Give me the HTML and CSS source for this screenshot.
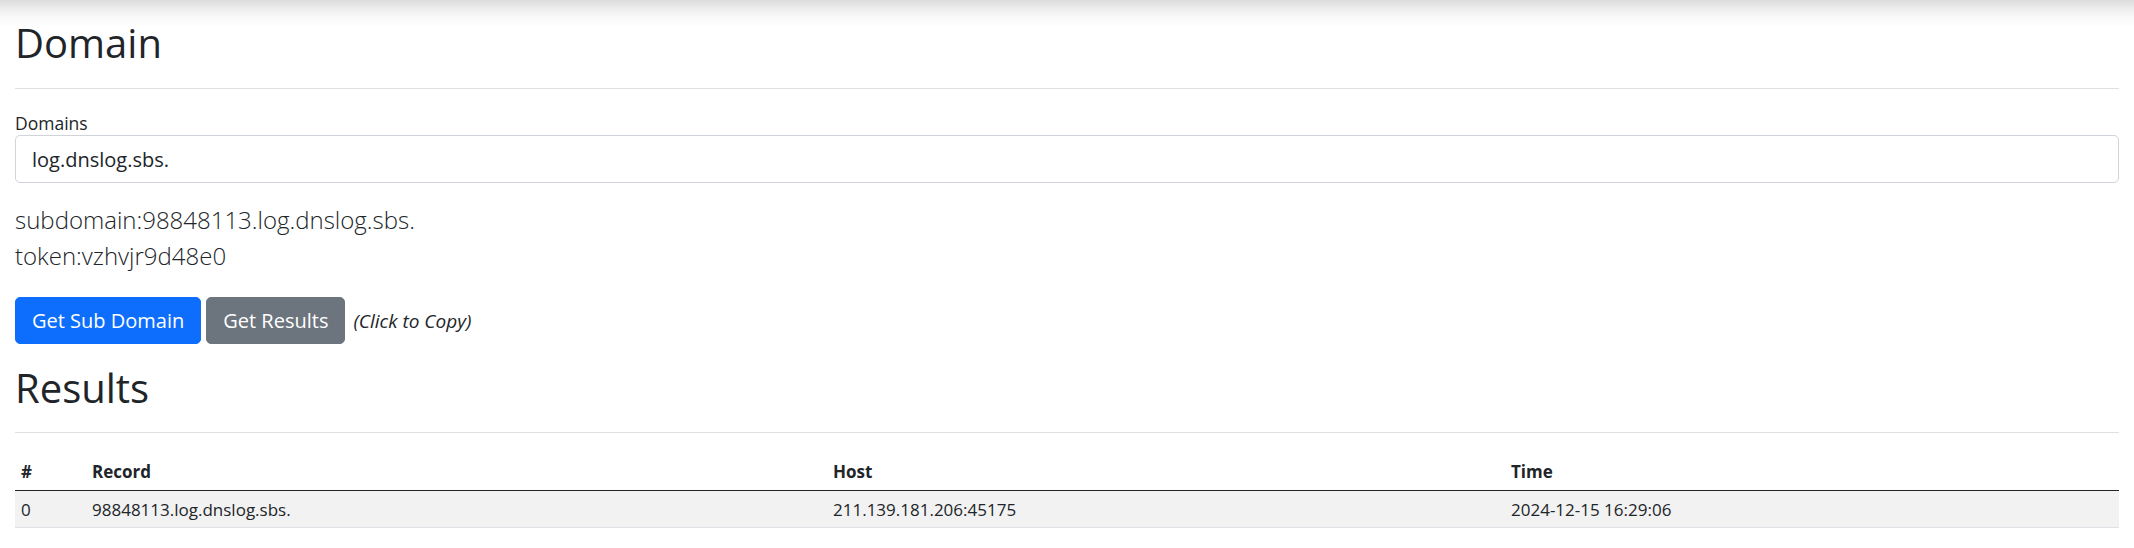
FILE: index.html
```html
<!DOCTYPE html>
<html lang="en">
<head>
<meta charset="utf-8">
<title>DNSLog</title>
<link rel="stylesheet" href="styles.css">
</head>
<body>
<main class="page">
  <section class="panel">
    <h1 class="title">Domain</h1>
    <hr class="rule">
    <label class="field-label" for="domains">Domains</label>
    <input class="field-input" id="domains" type="text" value="log.dnslog.sbs.">
    <div class="lead">
      <div class="lead-line">subdomain:98848113.log.dnslog.sbs.</div>
      <div class="lead-line">token:vzhvjr9d48e0</div>
    </div>
    <div class="actions">
      <button class="btn btn-primary" type="button">Get Sub Domain</button>
      <button class="btn btn-secondary" type="button">Get Results</button>
      <em class="hint">(Click to Copy)</em>
    </div>
  </section>
  <section class="panel">
    <h1 class="title title-results">Results</h1>
    <hr class="rule rule-results">
    <table class="results">
      <thead>
        <tr>
          <th class="col-idx">#</th>
          <th class="col-record">Record</th>
          <th class="col-host">Host</th>
          <th class="col-time">Time</th>
        </tr>
      </thead>
      <tbody>
        <tr>
          <td>0</td>
          <td>98848113.log.dnslog.sbs.</td>
          <td>211.139.181.206:45175</td>
          <td>2024-12-15 16:29:06</td>
        </tr>
      </tbody>
    </table>
  </section>
</main>
</body>
</html>
```

FILE: styles.css
```css
html, body {
  margin: 0;
  padding: 0;
}

body {
  font-family: "Open Sans", "Noto Sans", "Liberation Sans", sans-serif;
  font-size: 16px;
  line-height: 24px;
  color: #212529;
  background: #fff linear-gradient(to bottom, #dcdcdc 0, #ececec 8px, #f8f8f8 16px, #fff 28px) no-repeat;
  background-size: 100% 30px;
}

.page {
  padding: 19px 15px 0 15px;
}

.title {
  margin: 0 0 21px 0;
  font-size: 40px;
  line-height: 48px;
  font-weight: 400;
}

.title-results {
  margin-bottom: 20px;
}

.rule {
  margin: 0 0 22px 0;
  border: 0;
  height: 1px;
  background: #dfe0e1;
}

.rule-results {
  margin-bottom: 21px;
}

.field-label {
  display: block;
  font-size: 17.5px;
  line-height: 24px;
  margin: 0;
}

.field-input {
  display: block;
  box-sizing: border-box;
  width: 100%;
  height: 48px;
  margin: 0;
  padding: 8px 16px;
  font-family: inherit;
  font-size: 20px;
  line-height: 30px;
  color: #212529;
  background: #fff;
  border: 1px solid #ced4da;
  border-radius: 5px;
  outline: none;
}

.lead {
  margin-top: 19px;
  font-size: 24px;
  line-height: 36px;
  font-weight: 300;
}

.actions {
  display: flex;
  align-items: center;
  gap: 5px;
  margin-top: 23px;
}

.btn {
  box-sizing: border-box;
  height: 47px;
  padding: 0 16px;
  font-family: inherit;
  font-size: 20px;
  line-height: 30px;
  font-weight: 400;
  color: #fff;
  border: 1px solid transparent;
  border-radius: 5px;
}

.btn-primary {
  background: #0d6efd;
  border-color: #0d6efd;
}

.btn-secondary {
  background: #6c757d;
  border-color: #6c757d;
}

.hint {
  margin-left: 3px;
  font-size: 19px;
  font-style: italic;
  padding-top: 1px;
}

.title-results {
  margin-top: 20px;
}

.results {
  width: 100%;
  border-collapse: collapse;
  font-size: 17px;
  line-height: 24px;
}

.results th {
  text-align: left;
  font-weight: 700;
  padding: 6px;
  border-bottom: 1px solid #212529;
}

.results td {
  padding: 7px 6px 5px 6px;
  background: #f2f2f2;
  border-bottom: 1px solid #dee2e6;
}

.col-idx { width: 59px; }
.col-record { width: 729px; }
.col-host { width: 666px; }
.col-time { width: auto; }
```
